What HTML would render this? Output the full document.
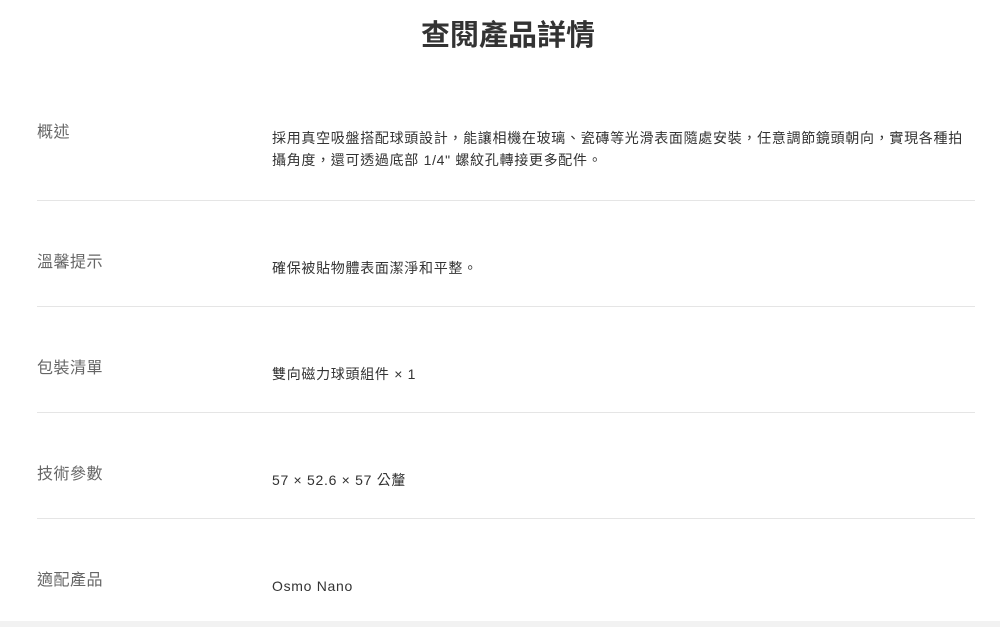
<!DOCTYPE html>
<html><head><meta charset="utf-8"><style>
body{margin:0;width:1000px;height:627px;background:#fff;position:relative;overflow:hidden;font-family:"Liberation Sans","Noto Sans CJK TC",sans-serif;}
h1{position:absolute;top:14px;left:0;width:1016px;text-align:center;margin:0;font-size:29px;font-weight:bold;color:#333;line-height:44px;}
.l{position:absolute;left:37px;font-size:16px;color:#666;line-height:22px;letter-spacing:0.5px;}
.v{position:absolute;left:272px;font-size:14px;color:#333;line-height:22px;width:720px;letter-spacing:0.7px;white-space:nowrap;}
.hr{position:absolute;left:37px;width:938px;height:1px;background:#e5e5e5;}
.bot{position:absolute;left:0;top:621px;width:1000px;height:6px;background:#f2f2f2;}
</style></head><body>
<h1>查閱產品詳情</h1>
<div class="l" style="top:122px">概述</div>
<div class="v" style="top:127px">採用真空吸盤搭配球頭設計，能讓相機在玻璃、瓷磚等光滑表面隨處安裝，任意調節鏡頭朝向，實現各種拍<br>攝角度，還可透過底部 1/4" 螺紋孔轉接更多配件。</div>
<div class="hr" style="top:200px"></div>
<div class="l" style="top:252px">溫馨提示</div>
<div class="v" style="top:257px">確保被貼物體表面潔淨和平整。</div>
<div class="hr" style="top:306px"></div>
<div class="l" style="top:358px">包裝清單</div>
<div class="v" style="top:363px">雙向磁力球頭組件 × 1</div>
<div class="hr" style="top:412px"></div>
<div class="l" style="top:464px">技術參數</div>
<div class="v" style="top:469px">57 × 52.6 × 57 公釐</div>
<div class="hr" style="top:518px"></div>
<div class="l" style="top:570px">適配產品</div>
<div class="v" style="top:575px">Osmo Nano</div>
<div class="bot"></div>
</body></html>
